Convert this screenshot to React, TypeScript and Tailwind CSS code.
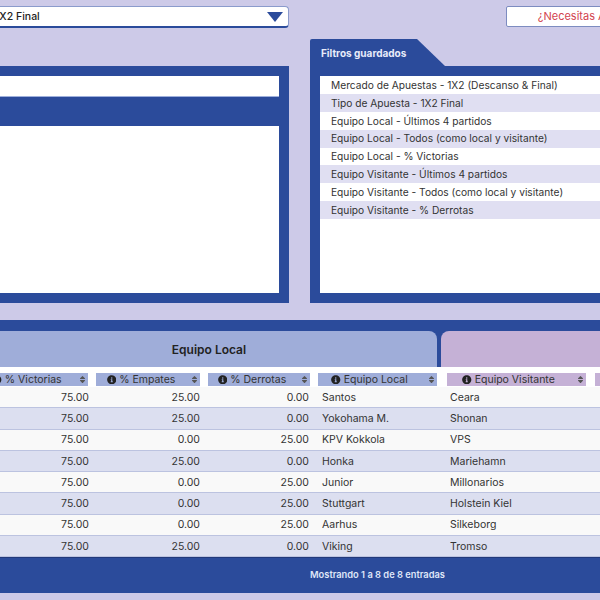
import { FaInfoCircle, FaSort } from "react-icons/fa";

const filtros = [
  "Mercado de Apuestas - 1X2 (Descanso & Final)",
  "Tipo de Apuesta - 1X2 Final",
  "Equipo Local - Últimos 4 partidos",
  "Equipo Local - Todos (como local y visitante)",
  "Equipo Local - % Victorias",
  "Equipo Visitante - Últimos 4 partidos",
  "Equipo Visitante - Todos (como local y visitante)",
  "Equipo Visitante - % Derrotas",
];

const filas = [
  ["75.00", "25.00", "0.00", "Santos", "Ceara"],
  ["75.00", "25.00", "0.00", "Yokohama M.", "Shonan"],
  ["75.00", "0.00", "25.00", "KPV Kokkola", "VPS"],
  ["75.00", "25.00", "0.00", "Honka", "Mariehamn"],
  ["75.00", "0.00", "25.00", "Junior", "Millonarios"],
  ["75.00", "0.00", "25.00", "Stuttgart", "Holstein Kiel"],
  ["75.00", "0.00", "25.00", "Aarhus", "Silkeborg"],
  ["75.00", "25.00", "0.00", "Viking", "Tromso"],
];

const cols = "grid grid-cols-[120px_112px_110px_128px_149px_100px]";

function Head({ label, cls, pad }: { label: string; cls: string; pad: string }) {
  return (
    <div className={`h-[13px] flex items-center relative text-[#333] ${cls}`}>
      <div className={`flex-1 flex items-center justify-center gap-[3px] ${pad}`}>
        <FaInfoCircle className="text-[9.5px] text-[#222]" />
        <span>{label}</span>
      </div>
      <FaSort className="absolute right-[1px] text-[9px] text-[#555]" />
    </div>
  );
}

export default function App() {
  return (
    <div className="w-[600px] h-[600px] overflow-hidden bg-[#cdcae8] font-['Inter','Liberation_Sans',sans-serif] pt-[6px]">
      <div className="flex w-[800px]">
        <div className="-ml-[10px] w-[299px] h-[22px] bg-white rounded-[4px] border border-[#8b9bcc] border-b-2 border-b-[#2b4b9b] flex items-center justify-between pl-[4px] pr-[5px] text-[10.5px] font-medium text-[#222] shrink-0">
          <span>1X2 Final</span>
          <svg width="16" height="10" viewBox="0 0 16 10"><path d="M0 0h16L8 10z" fill="#2b4b9b" /></svg>
        </div>
        <div className="ml-[217px] w-[160px] h-[21px] bg-white rounded-[2px] border border-[#7d8cc0] text-[11px] text-[#d2434f] flex items-center justify-center pl-[2px] shrink-0">
          ¿Necesitas Ayuda?
        </div>
      </div>

      <div className="flex items-end mt-[11px] w-[800px]">
        <div className="-ml-[10px] w-[299px] h-[237px] bg-[#2b4b9b] p-[10px] shrink-0 flex flex-col">
          <div className="h-[21px] bg-white border-b border-[#9fb0dc]" />
          <div className="h-[167px] mt-[29px] bg-white" />
        </div>
        <div className="ml-[21px] w-[400px] shrink-0">
          <div className="w-[135px] h-[27px] bg-[#2b4b9b] rounded-tl-[2px] [clip-path:polygon(0_0,107px_0,135px_100%,0_100%)] flex items-center pl-[11px] pt-[2px] text-[10px] font-bold text-[#e8ecfa]">
            Filtros guardados
          </div>
          <div className="h-[237px] bg-[#2b4b9b] p-[10px]">
            <div className="h-[217px] bg-white text-[10.2px] text-[#333]">
              {filtros.map((f, i) => (
                <div key={f} className={`h-[17.9px] flex items-center pl-[11px] pt-[1px] ${i % 2 ? "bg-[#e0dff2]" : "bg-white"}`}>
                  {f}
                </div>
              ))}
            </div>
          </div>
        </div>
      </div>

      <div className="mt-[17px]">
        <div className="bg-[#2b4b9b] pt-[11px] flex h-[47px] overflow-hidden">
          <div className="-ml-[19px] w-[456px] shrink-0 bg-[#9fadd9] rounded-tr-[8px] flex items-center justify-center pt-[2px] text-[12px] font-semibold text-[#222]">
            Equipo Local
          </div>
          <div className="ml-[4px] w-[300px] shrink-0 bg-[#c5b1d6] rounded-tl-[8px]" />
        </div>

        <div className="bg-white overflow-hidden text-[10.5px]">
          <div className={`${cols} -ml-[28px] w-[720px] pt-[6px] pb-[1px]`}>
            <Head label="% Victorias" cls="bg-[#9fadd9] mr-[4px]" pad="pr-[6px]" />
            <Head label="% Empates" cls="bg-[#9fadd9] mx-[4px]" pad="pr-[14px]" />
            <Head label="% Derrotas" cls="bg-[#9fadd9] mx-[4px]" pad="pr-[14px]" />
            <Head label="Equipo Local" cls="bg-[#9fadd9] ml-[4px] mr-[5px]" pad="pr-[16px]" />
            <Head label="Equipo Visitante" cls="bg-[#c5b1d6] ml-[5px] mr-[5px]" pad="pr-[16px]" />
            <div className="h-[13px] ml-[4px] bg-[#c5b1d6]" />
          </div>
          {filas.map((r, i) => (
            <div
              key={r[3]}
              className={`${cols} -ml-[28px] w-[720px] h-[21.25px] items-center pt-[1px] text-[#333] border-b border-[#bcc3e0] ${i % 2 ? "bg-[#dcdff0]" : "bg-[#f9f9f9]"}`}
            >
              <div className="text-right pr-[3px]">{r[0]}</div>
              <div className="text-right pr-[4px]">{r[1]}</div>
              <div className="text-right pr-[5px]">{r[2]}</div>
              <div className="pl-[8px]">{r[3]}</div>
              <div className="pl-[8px]">{r[4]}</div>
            </div>
          ))}
        </div>

        <div className="h-[36px] bg-[#2b4b9b] border-t border-[#22397a] flex items-center justify-center pb-[2px] text-[9.3px] font-semibold text-[#dfe6f8] pl-[155px]">
          Mostrando 1 a 8 de 8 entradas
        </div>
      </div>
    </div>
  );
}
